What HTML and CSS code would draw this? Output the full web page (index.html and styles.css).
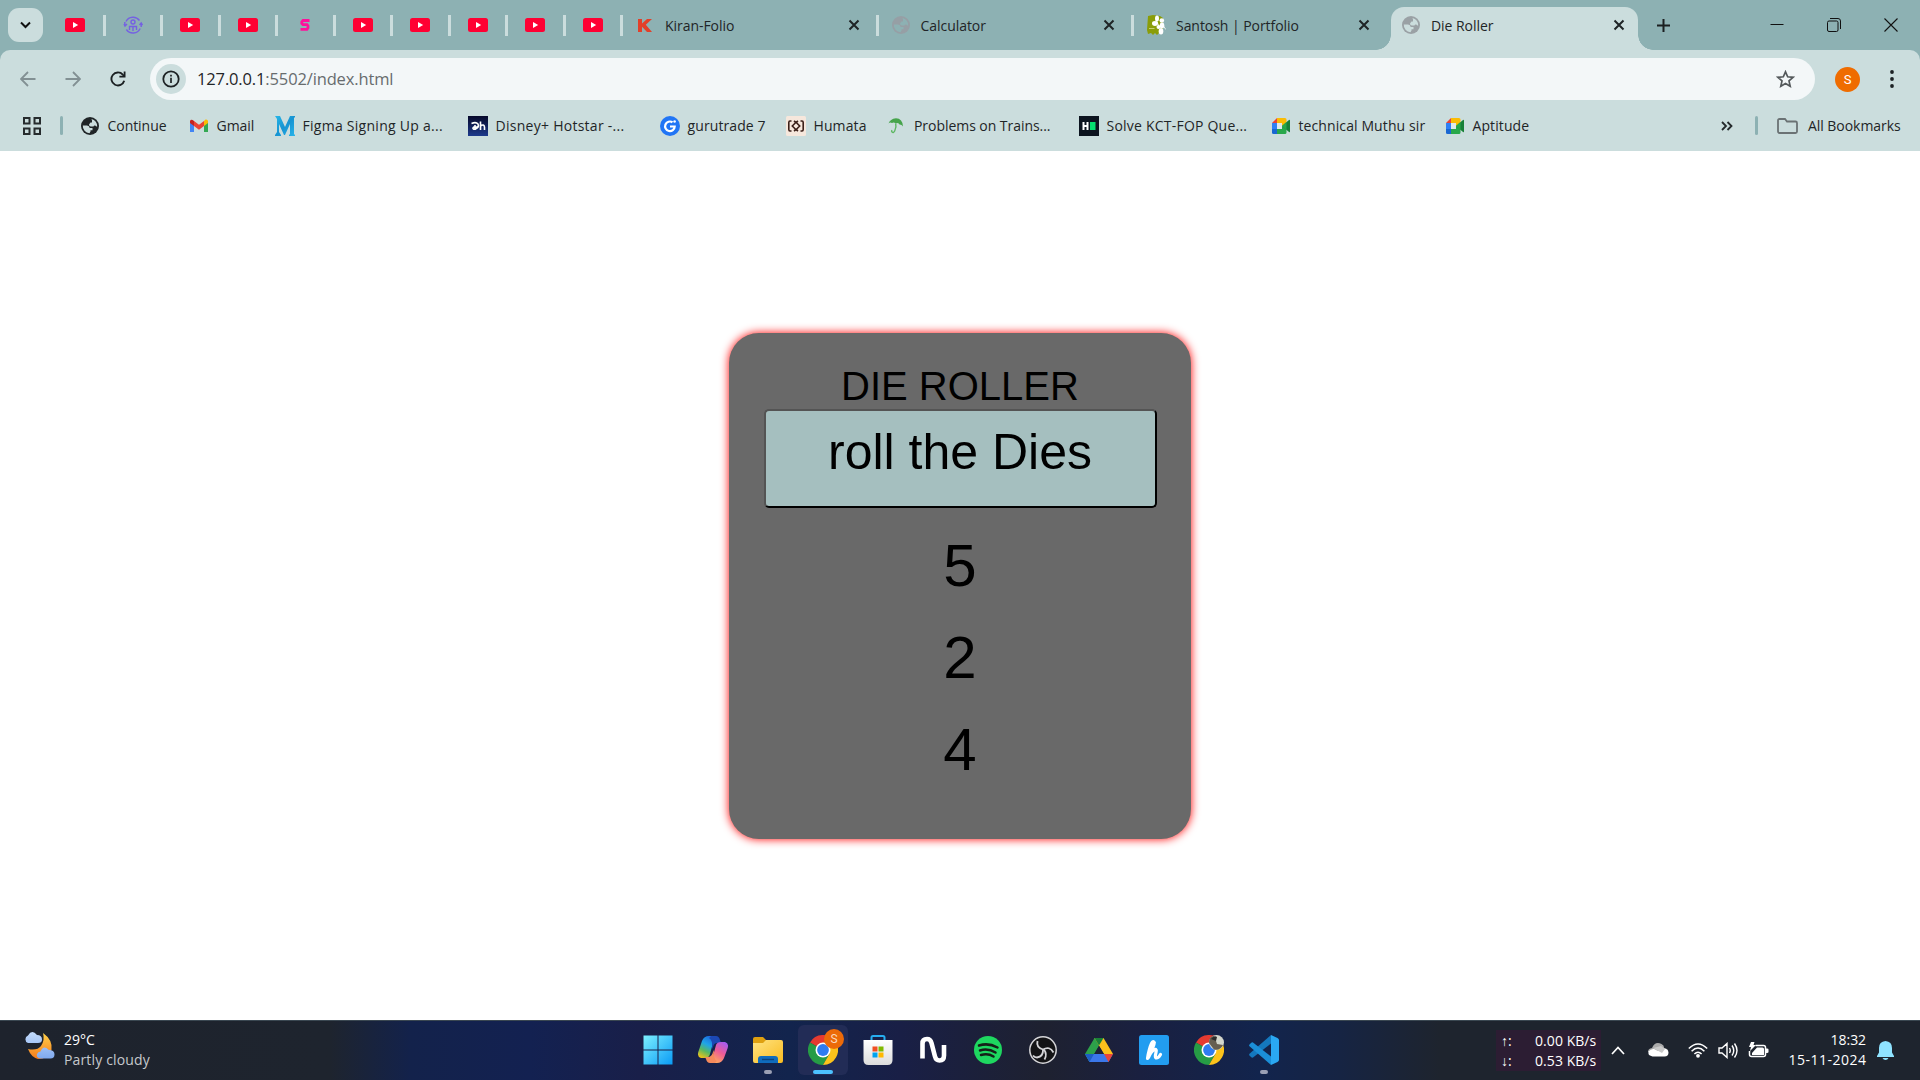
FILE: index.html
```html
<!DOCTYPE html>
<html lang="en">
<head>
<meta charset="utf-8">
<title>Die Roller</title>
<link rel="stylesheet" href="styles.css">
</head>
<body>
<svg class="defs" width="0" height="0" aria-hidden="true">
  <defs>
    <linearGradient id="win" x1="0" y1="0" x2="1" y2="1"><stop offset="0" stop-color="#7df0ff"/><stop offset="1" stop-color="#0a9bf5"/></linearGradient>
    <linearGradient id="copA" x1="0.6" y1="0" x2="0.2" y2="1"><stop offset="0" stop-color="#1c6fe0"/><stop offset=".35" stop-color="#1fa5e8"/><stop offset=".65" stop-color="#58b862"/><stop offset="1" stop-color="#f3c316"/></linearGradient>
    <linearGradient id="copB" x1="0.8" y1="0" x2="0.3" y2="1"><stop offset="0" stop-color="#a45cf2"/><stop offset=".5" stop-color="#ee5c96"/><stop offset="1" stop-color="#ffa85c"/></linearGradient>
    <linearGradient id="fold" x1="0" y1="0" x2="1" y2="1"><stop offset="0" stop-color="#ffe382"/><stop offset="1" stop-color="#f9bc20"/></linearGradient>
    <linearGradient id="store" x1="0" y1="0" x2="0" y2="1"><stop offset="0" stop-color="#fff"/><stop offset="1" stop-color="#dcdcdc"/></linearGradient>
    <linearGradient id="moon" x1="0" y1="0" x2="0" y2="1"><stop offset="0" stop-color="#ffd24a"/><stop offset="1" stop-color="#f57a1c"/></linearGradient>
    <linearGradient id="cloud" x1="0" y1="0" x2="0" y2="1"><stop offset="0" stop-color="#c4dcfc"/><stop offset="1" stop-color="#7fa9ee"/></linearGradient>
    <linearGradient id="hot" x1="0" y1="0" x2="0" y2="1"><stop offset="0" stop-color="#06082a"/><stop offset="1" stop-color="#1d3a8c"/></linearGradient>
    <linearGradient id="medium" x1="0" y1="0" x2="1" y2="1"><stop offset="0" stop-color="#27b7e8"/><stop offset=".5" stop-color="#1794d2"/><stop offset="1" stop-color="#27b4ea"/></linearGradient>
    <symbol id="yt" viewBox="0 0 20 14"><rect width="20" height="14" rx="2.500" fill="#f03"/><path d="M8 4v6l5.200-3z" fill="#fff"/></symbol>
    <symbol id="globe" viewBox="0 0 18 18"><circle cx="9" cy="9" r="9" fill="currentColor"/><path d="M10.500 1.900A7.200 7.200 0 0 1 16.200 9.500Q15 9.800 14.300 8.500 13 8 12.500 9.500H9.800Q8 9.300 8 7.500L9.500 5.500H11V3.600zM1.800 8.500H6Q8.500 8.700 8.700 11H11.500V13.200H9.500V14.500L8.500 16.200A7.200 7.200 0 0 1 1.800 8.500z" fill="var(--cut)"/></symbol>
    <symbol id="x" viewBox="0 0 12 12"><path d="M1.500 1.500l9 9m0-9l-9 9" stroke="#1f2426" stroke-width="2"/></symbol>
    <symbol id="meet" viewBox="0 0 20 18"><path d="M1 6l5-5v5z" fill="#ea4335"/><path d="M6 1h8q1.500 0 1.500 1.500V7L11 9V6H6z" fill="#fbbc04"/><path d="M1 6h5v6H1z" fill="#2f80f5"/><path d="M1 12h5v5H2.500Q1 17 1 15.500z" fill="#1967d2"/><path d="M6 6h5v6H6z" fill="#dfe9ea"/><path d="M6 12h5V9l4.500 2v4.500Q15.500 17 14 17H6z" fill="#28a84a"/><path d="M11 9l7-6q1-.7 1 .5v11q0 1.200-1 .5z" fill="#188038"/><path d="M11 9l4.500-4v8z" fill="#28a84a"/></symbol>
    <symbol id="chrome" viewBox="0 0 30 30"><path d="M15 15L2 7.500A15 15 0 0 1 28 7.500H15z" fill="#e53a30"/><path d="M15 15L2 7.500A15 15 0 0 0 15 30l6.500-11.300z" fill="#269c45"/><path d="M15 7.500h13A15 15 0 0 1 15 30l6.500-11.300z" fill="#fcc31b"/><circle cx="15" cy="15" r="7.500" fill="#fff"/><circle cx="15" cy="15" r="5.900" fill="#2f7cf0"/></symbol>
    <symbol id="arrow" viewBox="0 0 16 16"><path d="M15.500 8H1.500M8 1L1 8l7 7" fill="none" stroke="#829093" stroke-width="1.800"/></symbol>
  </defs>
</svg>

<header class="tabstrip">
  <button class="tab-search"><svg width="11" height="8" viewBox="0 0 11 8"><path d="M1 1.500L5.500 6 10 1.500" fill="none" stroke="#111" stroke-width="2"/></svg></button>
  <div class="pinned">
    <div class="pin"><svg class="yt"><use href="#yt"/></svg></div>
    <div class="pin"><svg width="20" height="18" viewBox="0 0 20 18" fill="none" stroke="#7561e2" stroke-width="1.400"><path d="M3 5.500a8 8 0 0 1 13.500-1M17.200 12.500a8 8 0 0 1-13.800 1M1.800 6v4M18.200 7v4M1 8l1 2 2-2M16.500 9l1.700-2L19.500 9"/><circle cx="10" cy="6" r="2"/><path d="M6.500 14v-3.500h7V14M10 10.500V15"/></svg></div>
    <div class="pin"><svg class="yt"><use href="#yt"/></svg></div>
    <div class="pin"><svg class="yt"><use href="#yt"/></svg></div>
    <div class="pin"><svg width="10" height="12" viewBox="0 0 10 12"><path d="M9.500 1.500H3L1.800 3v1.500L3 5.700h4l1 1.200v2L7 10.300H.5" fill="none" stroke="#ff109c" stroke-width="2.800"/></svg></div>
    <div class="pin"><svg class="yt"><use href="#yt"/></svg></div>
    <div class="pin"><svg class="yt"><use href="#yt"/></svg></div>
    <div class="pin"><svg class="yt"><use href="#yt"/></svg></div>
    <div class="pin"><svg class="yt"><use href="#yt"/></svg></div>
    <div class="pin"><svg class="yt"><use href="#yt"/></svg></div>
  </div>
  <div class="tab"><span class="fav"><svg width="14" height="13" viewBox="0 0 14 13"><path d="M0 0h4v4.500L9 0h5L7.800 5.800 14 13H9L4 7.800V13H0z" fill="#e2402a"/></svg></span><span class="name">Kiran-Folio</span><svg class="close"><use href="#x"/></svg></div>
  <div class="tab"><span class="fav"><svg class="globe grey-on-teal"><use href="#globe"/></svg></span><span class="name">Calculator</span><svg class="close"><use href="#x"/></svg></div>
  <div class="tab last"><span class="fav"><svg width="19" height="20" viewBox="0 0 19 20"><path d="M1 1l5-1 7 1 3 2v14l-2 2-2-1-2 2-2-2-2 2-2-2-3 1-1-4z" fill="#8a9d08"/><g fill="#fff"><ellipse cx="10" cy="3.500" rx="2" ry="3"/><circle cx="14.800" cy="5.500" r="2.300"/><ellipse cx="8" cy="8.500" rx="3" ry="2.400"/><ellipse cx="15" cy="10.500" rx="2.300" ry="3"/><circle cx="11.500" cy="12" r="2"/><ellipse cx="14" cy="16.300" rx="2.300" ry="3.200"/></g><path d="M16.500 11l2.300 3.500M9 5l4 8" stroke="#fff" stroke-width=".8"/><path d="M2 13.500h5.500" stroke="#c6d070"/></svg></span><span class="name">Santosh | Portfolio</span><svg class="close"><use href="#x"/></svg></div>
  <div class="tab active"><span class="fav"><svg class="globe grey-on-light"><use href="#globe"/></svg></span><span class="name">Die Roller</span><svg class="close"><use href="#x"/></svg></div>
  <button class="new-tab"><svg width="13" height="13" viewBox="0 0 13 13"><path d="M6.500 0v13M0 6.500h13" stroke="#1a1f20" stroke-width="2"/></svg></button>
  <div class="window-controls">
    <svg width="14" height="14" viewBox="0 0 14 14"><path d="M.5 6.500h13" stroke="#111"/></svg>
    <svg width="14" height="14" viewBox="0 0 14 14" fill="none" stroke="#111"><rect x=".5" y="3" width="10.500" height="10.500" rx="1.500"/><path d="M3 .5h8Q13.500.5 13.500 3v8"/></svg>
    <svg width="14" height="14" viewBox="0 0 14 14"><path d="M.5.5l13 13m0-13l-13 13" stroke="#111" stroke-width="1.100"/></svg>
  </div>
</header>

<section class="chrome-panel">
  <nav class="toolbar">
    <div class="nav-buttons">
      <svg width="16" height="16"><use href="#arrow"/></svg>
      <svg class="flip" width="16" height="16"><use href="#arrow"/></svg>
      <svg width="16" height="16" viewBox="0 0 16 16"><path d="M14.200 9.700A6.500 6.500 0 1 1 12.800 3.600L14 4.800" fill="none" stroke="#1b2022" stroke-width="1.900"/><path d="M15.500.5v6H9.400V4.700h4.300V.5z" fill="#1b2022"/></svg>
    </div>
    <div class="omnibox">
      <span class="info"><svg width="18" height="18" viewBox="0 0 18 18"><circle cx="9" cy="9" r="7.700" fill="none" stroke="#1d2224" stroke-width="1.800"/><path d="M9 7.800V13M9 4.800v1.700" stroke="#1d2224" stroke-width="1.700"/></svg></span>
      <span class="url">127.0.0.1<span class="path">:5502/index.html</span></span>
      <svg class="star" width="19" height="18" viewBox="0 0 19 18"><path d="M9.500 1.800l2.200 5 5.400.5-4.100 3.600 1.200 5.300-4.700-2.800-4.700 2.800L6 10.900 1.900 7.300l5.400-.5z" fill="none" stroke="#54595b" stroke-width="1.700"/></svg>
    </div>
    <span class="avatar">S</span>
    <svg class="menu" width="4" height="18" viewBox="0 0 4 18"><circle cx="2" cy="2" r="1.900"/><circle cx="2" cy="9" r="1.900"/><circle cx="2" cy="16" r="1.900"/></svg>
  </nav>
  <nav class="bookmarks">
    <svg class="apps" width="18" height="18" viewBox="0 0 18 18" fill="none" stroke="#262b2d" stroke-width="2"><path d="M1 1h5.500v5.500H1zM11.500 1H17v5.500h-5.500zM1 11.500h5.500V17H1zM11.500 11.500H17V17h-5.500z"/></svg>
    <i class="divider"></i>
    <div class="links">
      <a><svg class="globe dark"><use href="#globe"/></svg>Continue</a>
      <a><svg viewBox="0 0 20 20"><path d="M1 5v11h4V9z" fill="#4285f4"/><path d="M15 9v7h4V5z" fill="#34a853"/><path d="M15 5v5l4-3V5q-.5-2-2.500-1.500z" fill="#fbbc04"/><path d="M5 5l5 3.800L15 5v5l-5 3.800L5 10z" fill="#ea4335"/><path d="M1 5v2l4 3V5Q2 2.500 1 5z" fill="#c5221f"/></svg>Gmail</a>
      <a class="wide"><svg viewBox="0 0 20 20"><path d="M0 0h5l5 11 5-11h5v1l-1 1v16l1 1v1h-6v-1l1-1V8l-5 11h-1L4 8v8l2 3v1H0v-1l2-3V3z" fill="url(#medium)"/></svg>Figma Signing Up a...</a>
      <a class="wide"><svg viewBox="0 0 20 20"><rect width="20" height="20" fill="url(#hot)"/><path d="M3.500 7.500q4.500-2 6.500.5 1.500 3-2.500 5-3 .5-2.500-1.200 1-1.600 5-.6M7 9v5M12.500 5.500V14M12.500 10q3.500-2.500 4 1v3" fill="none" stroke="#fff" stroke-width="1.600"/></svg>Disney+ Hotstar -...</a>
      <a class="loose"><svg viewBox="0 0 20 20"><circle cx="10" cy="10" r="10" fill="#2175f5"/><path d="M12.500 6.300A4.800 4.800 0 1 0 14.700 10.500H10" fill="none" stroke="#fff" stroke-width="2.200"/><circle cx="14.600" cy="5.500" r="1.300" fill="#fff"/></svg>gurutrade 7</a>
      <a class="loose"><svg viewBox="0 0 20 20"><rect width="20" height="20" rx="1.500" fill="#f6e7dc"/><path d="M5.500 5H4Q2.800 5 2.800 6.500v7Q2.800 15 4 15h1.500M14.500 5H16q1.200 0 1.200 1.500v7Q17.200 15 16 15h-1.500M10 6.300L13.700 10 10 13.700 6.300 10zM8 5l2 1.500L12 5M8 15l2-1.500 2 1.500" fill="none" stroke="#3a1f18" stroke-width="1.600"/></svg>Humata</a>
      <a><svg viewBox="0 0 20 20"><path d="M1.500 7.500Q3 3 9 2.300q6.500.2 7 8.200-1.500-2.200-3.500-2Q11 6.300 8.500 7.500 7 5.800 5 7 3 6 1.500 7.500z" fill="#46a44b"/><path d="M8.700 7.500q1 4-1 7.500-1.200 2-2.500 1.200-1-.7-.3-2" fill="none" stroke="#5cb761" stroke-width="1.400"/></svg>Problems on Trains...</a>
      <a class="solve"><svg viewBox="0 0 20 20"><rect width="20" height="20" fill="#0c141f"/><path d="M4.500 6v8M8.500 6v8M4.500 10h4" stroke="#fff" stroke-width="2"/><rect x="11" y="6" width="5.500" height="8" fill="#05e070"/></svg>Solve KCT-FOP Que...</a>
      <a class="loose"><svg viewBox="0 0 20 18"><use href="#meet"/></svg>technical Muthu sir</a>
      <a class="loose"><svg viewBox="0 0 20 18"><use href="#meet"/></svg>Aptitude</a>
    </div>
    <svg class="more" width="12" height="10" viewBox="0 0 12 10"><path d="M1 1l4 4-4 4M6.500 1l4 4-4 4" fill="none" stroke="#24292b" stroke-width="1.800"/></svg>
    <i class="divider"></i>
    <span class="all"><svg width="21" height="16" viewBox="0 0 21 16"><path d="M1 13V2.500Q1 1 2.500 1H8l2 2.500h8.500Q20 3.500 20 5v8.500q0 1.500-1.500 1.500h-16Q1 15 1 13z" fill="none" stroke="#6b7274" stroke-width="1.800"/></svg>All Bookmarks</span>
  </nav>
</section>

<main class="page">
  <div class="card">
    <div class="title">DIE ROLLER</div>
    <button class="roll">roll the Dies</button>
    <div class="dice"><span>5</span><span>2</span><span>4</span></div>
  </div>
</main>

<footer class="taskbar">
  <div class="weather">
    <svg width="31" height="29" viewBox="0 0 31 29"><path d="M19 2q10 7 8.500 17Q24 28 14 28 7 26 4 18q9 2 13-3 4-6 2-13z" fill="url(#moon)"/><path d="M4 12a4 4 0 0 1 0-7.500Q8-2 13 4q5 0 5 4.500 0 3.500-4 3.500zM16 27.500q-4-1-3-4.500 1-2.500 3.500-2.500 3-7 8-1.800 6 .3 6 4.500 0 4.300-4 4.300z" fill="url(#cloud)"/></svg>
    <div class="weather-text"><b>29°C</b><span>Partly cloudy</span></div>
  </div>
  <div class="apps-row">
    <div class="app"><svg viewBox="0 0 30 30"><path d="M.5.500h14v14H.500zM15.500.500h14v14h-14zM.500 15.500h14v14H.500zM15.500 15.500h14v14h-14z" fill="url(#win)"/></svg></div>
    <div class="app"><svg viewBox="0 0 30 30"><path d="M11 1h6l-1 3-4 15q-1 4-5 4H3Q-1 22 .3 17L4 6Q6 1 11 1z" fill="url(#copA)"/><path d="M13 1h5q3 0 4 4l1 3h-4q-3 0-4 4l-1 2Q15 5 11 3z" fill="#1c48b4"/><path d="M19 28h-6l1-3 4-15q1-3 5-3h4q4 1 2.700 6L26 23q-2 5-7 5z" fill="url(#copB)"/><path d="M17 28h-5q-3 0-4-4l-1-2h4q3-1 4-5l1-2q-1 9 3 11z" fill="#f58a5c"/></svg></div>
    <div class="app running"><svg viewBox="0 0 30 30"><path d="M0 4q0-2 2-2h8l3 3v5H0z" fill="#dfa010"/><path d="M0 8h10l3-3h15q2 0 2 2v19q0 2-2 2H2q-2 0-2-2z" fill="url(#fold)"/><path d="M5 28v-4q0-3 3-3h14q3 0 3 3v4z" fill="#0f6cbd"/><path d="M9 24.500h12" stroke="#0a437c" stroke-width="1.400"/></svg></div>
    <div class="app focused"><svg><use href="#chrome"/></svg><span class="badge">S</span></div>
    <div class="app"><svg viewBox="0 0 30 30"><path d="M8.500 7V2.500Q8.500 1 10 1h10q1.500 0 1.500 1.500V7" fill="none" stroke="#26aef0" stroke-width="2"/><path d="M.5 5h29v20q0 5-5 5h-19q-5 0-5-5z" fill="url(#store)"/><path d="M9.500 11.500h5v5h-5z" fill="#f04f22"/><path d="M15.500 11.500h5v5h-5z" fill="#7fb900"/><path d="M9.500 17.500h5v5h-5z" fill="#00a3ee"/><path d="M15.500 17.500h5v5h-5z" fill="#ffb800"/></svg></div>
    <div class="app"><svg viewBox="0 0 30 30"><path d="M4.500 23.500V8.500Q4.500 4 9 4 12.500 4 13.500 8l3.500 13.500q1 4 4.500 4 4.500 0 4.500-5V10" fill="none" stroke="#fff" stroke-width="4.600"/></svg></div>
    <div class="app"><svg viewBox="0 0 30 30"><circle cx="15" cy="15" r="14" fill="#1ed760"/><path d="M6 10.500q9.500-3 18.500 2M7 15.500q8-2.500 15.500 2M8 20q7-2 12.500 1.500" fill="none" stroke="#152018" stroke-width="2.500" stroke-linecap="round"/></svg></div>
    <div class="app"><svg viewBox="0 0 30 30"><circle cx="15" cy="15" r="13.200" fill="#141416" stroke="#d5d5d8" stroke-width="1.500"/><path d="M9.500 6q-1.500 6.500 5.500 8.500M15 14.500q6.500-4 10.500 3M15 14.500q.5 7-6 8-2.500 0-4-2M16 14.500q3.500 5 .5 10" fill="none" stroke="#d5d5d8" stroke-width="1.800"/></svg></div>
    <div class="app"><svg viewBox="0 0 30 30"><path d="M10.500 3h9L5.500 27 1 19z" fill="#2da14a"/><path d="M10.500 3h9l9.500 16h-9z" fill="#fcc01c"/><path d="M1 19h28l-4.500 8h-19z" fill="#3b77ea"/><path d="M1 19h9l-4.500 8z" fill="#1d5fc4"/><path d="M20 19h9l-4.500 8z" fill="#e8453a"/><path d="M10.500 3h9L15 10.500z" fill="#188038"/><path d="M15 11l4.700 8h-9.400z" fill="#1d2135"/></svg></div>
    <div class="app"><svg viewBox="0 0 30 30"><rect width="30" height="30" rx="2.500" fill="#229df0"/><path d="M8.500 23.500Q10 14 12.500 8.500 14 5.500 15.300 7.500 15 12 10.500 17.500M9.500 22.500Q12 16 15.500 14.500q2.500-.5 1.500 3-1.500 5.500.5 5.500 2 0 4-3.500" fill="none" stroke="#fff" stroke-width="3.200" stroke-linecap="round"/></svg></div>
    <div class="app"><svg viewBox="0 0 30 30"><use href="#chrome"/><circle cx="22.500" cy="7.500" r="7.500" fill="#d3d6cb"/><path d="M15 8q0-7 5-7l2 5 1 3 6 1q-3 6-9 4.500z" fill="#665e50"/><path d="M17 4q3-4 6-2l-1 4z" fill="#2b2c2b"/></svg></div>
    <div class="app running"><svg viewBox="0 0 30 30"><path d="M22 0v8.500L4 22.500Q3 23 2 22L.5 20.500q-.8-1 0-1.800z" fill="#1478be"/><path d="M22 30v-8.500L4 7.500Q3 7 2 8L.5 9.500q-.8 1 0 1.800z" fill="#1b8fd8"/><path d="M22 0l6.500 3Q30 3.800 30 5v20q0 1.200-1.500 2L22 30z" fill="#2aa8f2"/></svg></div>
  </div>
  <div class="tray">
    <div class="netspeed"><span>↑:</span><span>0.00 KB/s</span><span>↓:</span><span>0.53 KB/s</span></div>
    <svg class="chevron" width="14" height="9" viewBox="0 0 14 9"><path d="M1 8l6-6.500L13 8" fill="none" stroke="#fff" stroke-width="1.700"/></svg>
    <svg class="onedrive" width="21" height="14" viewBox="0 0 21 14"><path d="M0 9q0-3.500 4-4 3-7 9.500-4 2.500 1 2.700 4Q21 6 20 9z" fill="#aaa"/><path d="M2 12.500Q0 12 .5 8.500 3 5.500 6 6l4 2 5-2.500q5 0 5.500 4 0 4-4 4h-12z" fill="#fff"/><path d="M5 5l9 5 3-4-4-3z" fill="#c9c9c9"/></svg>
    <svg class="wifi" width="20" height="16" viewBox="0 0 20 16"><path d="M.8 6.500Q10-2.500 19.200 6.500M3.600 9.300q6.400-6.500 12.800 0M6.400 12q3.600-3.700 7.200 0" fill="none" stroke="#fff" stroke-width="1.500"/><circle cx="10" cy="13.800" r="1.900" fill="#fff"/></svg>
    <svg class="volume" width="21" height="17" viewBox="0 0 21 17"><path d="M1 6v5h3l5 4.500v-14L4 6zM11.500 6q1.500 2.500 0 5M14 3.500q3.500 5 0 10M16.500 1.500q5 7 0 14" fill="none" stroke="#fff" stroke-width="1.400"/></svg>
    <svg class="battery" width="21" height="16" viewBox="0 0 21 16"><path d="M7.500 3.500h8q2 0 2 2v7q0 2-2 2h-12q-2 0-2-2V9" fill="none" stroke="#fff" stroke-width="1.500"/><path d="M4 12.500V11l5-5.500h5.500q1.500 0 1.500 1.500v6H4zM18 6.500h1q1.500 0 1.500 1v2.500q0 1-1.500 1h-1zM3 0h3.500L5.500 3H8L2 9l1-4H1z" fill="#fff"/></svg>
    <div class="clock"><span>18:32</span><span class="date">15-11-2024</span></div>
    <svg class="bell" width="17" height="19" viewBox="0 0 17 19"><path d="M8.500 0Q15 .5 15 7v4.500l2 3.500v1H0v-1l2-3.500V7Q2 .5 8.500 0zM5.500 17h6q-1 2-3 2t-3-2z" fill="#8fe3ff"/></svg>
  </div>
</footer>
</body>
</html>
```
FILE: styles.css
```css
* { box-sizing: border-box; }
body {
  margin: 0;
  width: 1920px;
  height: 1080px;
  overflow: hidden;
  display: flex;
  flex-direction: column;
  background: #fff;
  font: 14px/20px "Open Sans", "Noto Sans", sans-serif;
  letter-spacing: -0.050px;
  color: #1f2527;
}
.defs { position: absolute; }
svg { display: block; flex: none; }
button { border: 0; padding: 0; font: inherit; color: inherit; }

/* tab strip */
.tabstrip {
  height: 50px;
  flex: none;
  display: flex;
  align-items: center;
  background: #8db1b3;
  padding-left: 8px;
}
.tab-search {
  width: 35px;
  height: 34px;
  border-radius: 11px;
  background: #cbdddd;
  display: grid;
  place-items: center;
}
.pinned { display: flex; margin-left: 5px; }
.pin, .tab {
  display: flex;
  align-items: center;
  height: 21px;
  border-right: 3px solid #cbdddd;
}
.pin { width: 57.500px; justify-content: center; }
.yt { width: 20px; height: 14px; }
.tab { width: 255.500px; padding-left: 12px; }
.fav { width: 20px; display: grid; place-items: center; margin-right: 10px; }
.tab .name { flex: 1; position: relative; top: 1px; }
.close { width: 12px; height: 12px; margin-right: 16px; }
.globe { width: 18px; height: 18px; }
.grey-on-teal { color: #969fa5; --cut: #8db1b3; }
.grey-on-light { color: #9aa1a5; --cut: #cbdddd; }
.tab.last { border: 0; width: 256px; }
.tab.last .close { margin-right: 20px; }
.tab.active {
  position: relative;
  width: 247px;
  height: 43px;
  align-self: flex-end;
  border: 0;
  border-radius: 13px 13px 0 0;
  background: #cbdddd;
  padding: 0 0 7px 10px;
  margin-left: 1px;
}
.tab.active .close { margin-right: 13px; }
.tab.active::before, .tab.active::after {
  content: "";
  position: absolute;
  bottom: 0;
  width: 15px;
  height: 15px;
}
.tab.active::before { right: 100%; background: radial-gradient(circle at 0 0, transparent 14.500px, #cbdddd 15px); }
.tab.active::after { left: 100%; background: radial-gradient(circle at 100% 0, transparent 14.500px, #cbdddd 15px); }
.new-tab { background: none; margin-left: 18.500px; }
.window-controls { display: flex; gap: 43px; margin-left: auto; padding-right: 22px; }

/* toolbar */
.chrome-panel { flex: none; height: 101px; background: #cbdddd; box-shadow: 0 -12px 0 0 #8db1b3; border-radius: 10px 10px 0 0; position: relative; z-index: 0; }
.tabstrip { position: relative; z-index: 1; }
.toolbar { display: flex; align-items: center; height: 58px; }
.nav-buttons { width: 150px; display: flex; gap: 29px; padding-left: 20px; }
.flip { transform: scaleX(-1); }
.omnibox {
  width: 1665px;
  height: 42px;
  border-radius: 21px;
  background: #f3f7f8;
  display: flex;
  align-items: center;
  padding: 0 20px 0 6px;
}
.info {
  width: 30px;
  height: 30px;
  border-radius: 50%;
  background: #cbdddd;
  display: grid;
  place-items: center;
}
.url { flex: 1; margin-left: 11px; font-size: 16.500px; letter-spacing: -0.140px; }
.path { color: #676c6e; }
.avatar {
  width: 25px;
  height: 25px;
  border-radius: 50%;
  background: #ef6c00;
  color: #fff;
  font: 13px/25px Roboto, sans-serif;
  text-align: center;
  margin-left: 20px;
}
.menu { margin-left: 30px; fill: #1c2123; }
.bookmarks { display: flex; align-items: center; height: 35px; padding-left: 23px; }
.divider { width: 3px; height: 19px; border-radius: 2px; background: #8db1b3; }
.apps { margin-right: 19px; }
.links {
  width: 1640px;
  margin-left: 18px;
  display: grid;
  grid-template-columns: 108px 86px 193px 192px 126px 100.500px 192.500px 192px 174px 1fr;
}
.links a { display: flex; align-items: center; gap: 7.500px; white-space: nowrap; }
.links svg { width: 20px; height: 20px; }
.links svg.globe { width: 18px; height: 18px; margin-right: 1px; }
.links .wide { letter-spacing: 0.270px; }
.links .solve { letter-spacing: 0.220px; }
.links .loose { letter-spacing: 0.100px; }
.dark { color: #202527; --cut: #cbdddd; }
.more { margin-right: 22px; }
.all { display: flex; align-items: center; gap: 10px; margin-left: 19px; white-space: nowrap; }

/* page */
.page {
  flex: 1;
  display: flex;
  justify-content: center;
  align-items: flex-start;
  padding-top: 182px;
  font-family: Arial, "Liberation Sans", sans-serif;
  letter-spacing: 0;
  color: #000;
}
.card {
  width: 462px;
  height: 506px;
  padding-top: 30px;
  border-radius: 30px;
  background: #696969;
  box-shadow: 0 0 10px red;
  display: flex;
  flex-direction: column;
  align-items: center;
}
.title { font-size: 40px; line-height: 46px; }
.roll {
  width: 393px;
  height: 99px;
  margin-left: 1px;
  padding: 13px 1px 25px 0;
  border: 2px outset #000;
  border-radius: 5px;
  background: #a5bfbf;
  font-size: 50px;
  line-height: 57px;
}
.dice { display: flex; flex-direction: column; align-items: center; gap: 23px; margin-top: 23px; font-size: 60px; line-height: 69px; }

/* taskbar */
.taskbar {
  height: 60px;
  flex: none;
  display: flex;
  align-items: center;
  padding-bottom: 1px;
  border-top: 1px solid #3a4751;
  background: linear-gradient(90deg, #1e232d 0, #1e242e 330px, #13224b 410px, #132151 530px, #191f49 640px, #12244d 790px, #191f46 900px, #1e2130 1045px, #1a2040 1140px, #12244d 1260px, #162443 1340px, #1e242e 1440px);
  color: #fff;
}
.weather { width: 630px; display: flex; gap: 9px; padding-left: 24px; }
.weather-text { display: flex; flex-direction: column; margin-top: -1px; letter-spacing: 0.150px; }
.weather b { font-weight: 400; letter-spacing: 0; }
.weather span { color: #c5c8cc; }
.apps-row { display: flex; }
.app { width: 55.150px; height: 50px; display: grid; place-items: center; position: relative; }
.app > svg { width: 30px; height: 30px; }
.running::after, .focused::after {
  content: "";
  position: absolute;
  bottom: 1px;
  width: 8px;
  height: 4px;
  border-radius: 2px;
  background: #9a9fb4;
}
.focused { width: 50px; margin: 0 2.500px; border-radius: 6px; background: #222c56; }
.focused::after { width: 20px; background: #4cc2ff; }
.badge {
  position: absolute;
  left: 26px;
  top: 4px;
  width: 20px;
  height: 20px;
  border-radius: 50%;
  background: #ec6a08;
  color: #fbd9be;
  font: 12px/20px Roboto, sans-serif;
  text-align: center;
}
.tray { flex: 1; display: flex; align-items: center; margin-left: 204.500px; }
.netspeed {
  width: 105px;
  height: 41px;
  padding-top: 1px;
  display: grid;
  grid-template-columns: 34px 1fr;
  padding-left: 5px;
  background: #2c1d33;
  white-space: nowrap;
  letter-spacing: 0.050px;
}
.chevron { margin-left: 10px; }
.onedrive { margin-left: 23px; }
.wifi { margin-left: 19px; }
.volume { margin-left: 10px; }
.battery { margin-left: 9px; }
.clock { width: 97px; display: flex; flex-direction: column; text-align: right; }
.date { letter-spacing: 0.500px; margin-right: -0.500px; }
.bell { margin-left: 11px; }
```
